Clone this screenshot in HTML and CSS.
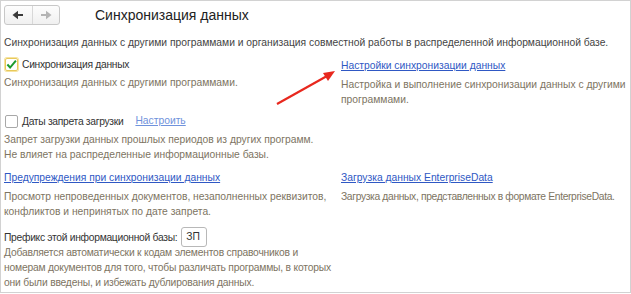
FILE: index.html
```html
<!DOCTYPE html>
<html lang="ru">
<head>
    <meta charset="UTF-8">
    <title>Синхронизация данных</title>
    <link rel="stylesheet" href="styles.css">
</head>
<body>
    <div class="frame">
        <div class="header">
            <div class="nav">
                <button class="nav-btn back">
                    <svg width="12" height="10" viewBox="0 0 12 10"><path d="M11 5 H5" stroke="#3a3a3a" stroke-width="2"/><path d="M0.5 5 L6 0.8 V9.2 Z" fill="#3a3a3a"/></svg>
                </button>
                <button class="nav-btn fwd">
                    <svg width="12" height="10" viewBox="0 0 12 10"><path d="M1 5 H7" stroke="#b4b4b4" stroke-width="2"/><path d="M11.5 5 L6 0.8 V9.2 Z" fill="#b4b4b4"/></svg>
                </button>
            </div>
            <div class="title">Синхронизация данных</div>
        </div>
        <div class="intro">Синхронизация данных с другими программами и организация совместной работы в распределенной информационной базе.</div>

        <div class="grid">
            <div class="cell">
                <label class="check-row">
                    <span class="box checked">
                        <svg width="12" height="11" viewBox="0 0 12 11"><path d="M1.5 5.5 L4.5 8.8 L10.8 1.2" fill="none" stroke="#1c9a2c" stroke-width="2.2"/></svg>
                    </span>
                    <span class="label">Синхронизация данных</span>
                </label>
                <div class="note">Синхронизация данных с другими программами.</div>
            </div>
            <div class="cell right">
                <a class="link" href="#">Настройки синхронизации данных</a>
                <div class="note">Настройка и выполнение синхронизации данных с другими программами.</div>
            </div>

            <div class="cell wide">
                <label class="check-row">
                    <span class="box"></span>
                    <span class="label">Даты запрета загрузки</span>
                    <a class="link light" href="#">Настроить</a>
                </label>
                <div class="note">Запрет загрузки данных прошлых периодов из других программ.<br>Не влияет на распределенные информационные базы.</div>
            </div>

            <div class="cell pad">
                <a class="link" href="#">Предупреждения при синхронизации данных</a>
                <div class="note">Просмотр непроведенных документов, незаполненных реквизитов, конфликтов и непринятых по дате запрета.</div>
            </div>
            <div class="cell pad right">
                <a class="link" href="#">Загрузка данных EnterpriseData</a>
                <div class="note nowrap tight">Загрузка данных, представленных в формате EnterpriseData.</div>
            </div>

            <div class="cell prefix">
                <div class="prefix-row">
                    <span class="label">Префикс этой информационной базы:</span>
                    <span class="field">ЗП</span>
                </div>
                <div class="note nowrap snug">Добавляется автоматически к кодам элементов справочников и<br>номерам документов для того, чтобы различать программы, в которых<br>они были введены, и избежать дублирования данных.</div>
            </div>
        </div>

        <svg class="arrow" width="70" height="40" viewBox="0 0 70 40">
            <path d="M2 37 L52 9" stroke="#e8281e" stroke-width="2.2" fill="none"/>
            <path d="M60 4 L48 6 L53 14 Z" fill="#e8281e"/>
        </svg>
    </div>
</body>
</html>
```

FILE: styles.css
```css
body {
    margin: 0;
    font-family: "Liberation Sans", Arial, sans-serif;
    background: #fff;
}
.frame {
    position: relative;
    width: 629px;
    height: 291px;
    border: 1px solid #d2d2d2;
    font-size: 10.3px;
    color: #444;
}
.header {
    display: flex;
    align-items: center;
    padding: 4px 0 0 3px;
    height: 20px;
}
.nav {
    display: flex;
    width: 54px;
    height: 18px;
    border: 1px solid #c8c8c8;
    border-radius: 3px;
    background: linear-gradient(#fdfdfd, #f0f0f0);
}
.nav-btn {
    flex: 1;
    display: flex;
    align-items: center;
    justify-content: center;
    border: none;
    background: none;
    padding: 0;
}
.nav-btn.back {
    border-right: 1px solid #d8d8d8;
}
.title {
    margin-left: 35px;
    font-size: 14px;
    color: #222;
}
.intro {
    padding: 10px 3px 0;
    line-height: 15px;
}
.grid {
    display: grid;
    grid-template-columns: 337px 1fr;
    padding: 6px 0 0 3px;
}
.cell {
    padding-right: 10px;
}
.cell.right {
    padding-right: 0;
}
.cell.wide {
    grid-column: 1 / 3;
    padding-top: 6px;
}
.cell.pad {
    padding-top: 6px;
}
.cell.prefix {
    grid-column: 1 / 3;
    padding-top: 8px;
}
.check-row {
    display: flex;
    align-items: center;
    gap: 4px;
    height: 16px;
}
.box {
    width: 11px;
    height: 11px;
    border: 1px solid #a8a8a8;
    border-radius: 2px;
    margin-left: 1px;
    display: flex;
    align-items: center;
    justify-content: center;
}
.box.checked {
    border-color: #e8c95a;
    box-shadow: 0 0 0 1px #f6e3a0;
}
.label {
    color: #333;
    letter-spacing: -0.3px;
}
.link {
    color: #2f58c4;
    text-decoration: underline;
    line-height: 16px;
}
.link.light {
    margin-left: 8px;
    color: #6f92dc;
}
.cell > .link {
    display: block;
    padding-top: 2px;
}
.note {
    color: #7d7462;
    line-height: 15px;
    margin-top: 3px;
}
.note.nowrap {
    white-space: nowrap;
}
.note.tight {
    letter-spacing: -0.35px;
}
.note.snug {
    letter-spacing: -0.2px;
}
.prefix-row {
    display: flex;
    align-items: center;
    gap: 4px;
}
.prefix .note {
    margin-top: -2px;
}
.field {
    width: 20px;
    height: 18px;
    border: 1px solid #b8b8b8;
    border-radius: 3px;
    line-height: 18px;
    padding-left: 4px;
    color: #333;
}
.arrow {
    position: absolute;
    left: 274px;
    top: 66px;
}
```
